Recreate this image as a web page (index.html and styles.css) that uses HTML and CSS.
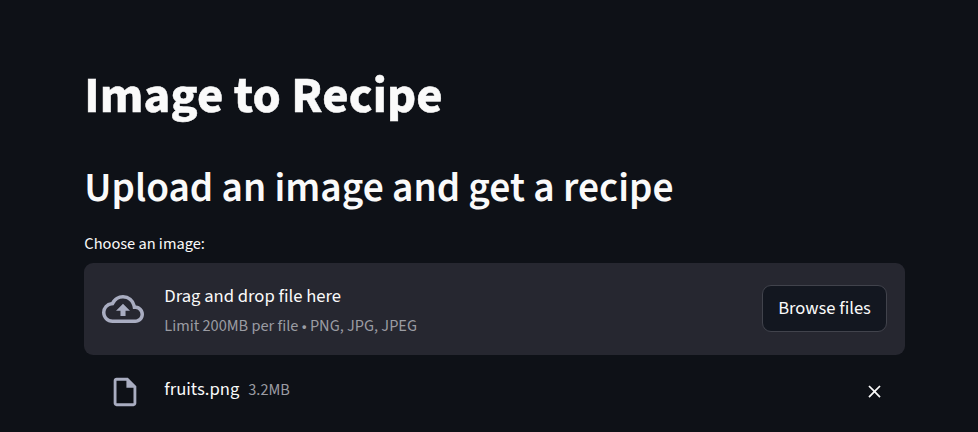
FILE: index.html
```html
<!DOCTYPE html>
<html lang="en">
<head>
<meta charset="utf-8">
<title>Image to Recipe</title>
<link rel="stylesheet" href="styles.css">
</head>
<body>
<main class="page">
  <h1 class="title">Image to Recipe</h1>
  <h2 class="subtitle">Upload an image and get a recipe</h2>
  <div class="label">Choose an image:</div>
  <section class="dropzone">
    <svg class="cloud" viewBox="0 0 24 24"><path d="M19.35 10.04A7.49 7.49 0 0 0 12 4C9.11 4 6.6 5.64 5.35 8.04A5.994 5.994 0 0 0 0 14c0 3.31 2.69 6 6 6h13c2.76 0 5-2.24 5-5 0-2.64-2.05-4.78-4.65-4.96zM19 18H6c-2.21 0-4-1.79-4-4 0-2.05 1.53-3.76 3.56-3.97l1.07-.11.5-.95A5.469 5.469 0 0 1 12 6c2.62 0 4.88 1.86 5.39 4.43l.3 1.5 1.53.11A2.98 2.98 0 0 1 22 15c0 1.65-1.35 3-3 3zM8 13h2.55v3h2.9v-3H16l-4-4z"/></svg>
    <div class="hint">
      <div class="drag">Drag and drop file here</div>
      <div class="limit">Limit 200MB per file • PNG, JPG, JPEG</div>
    </div>
    <button class="browse">Browse files</button>
  </section>
  <div class="file">
    <svg class="doc" viewBox="0 0 24 24"><path d="M14 2H6c-1.100 0-1.990.9-1.990 2L4 20c0 1.100.89 2 1.990 2H18c1.100 0 2-.9 2-2V8l-6-6zM6 20V4h7v5h5v11H6z"/></svg>
    <span class="name">fruits.png</span>
    <span class="size">3.2MB</span>
    <svg class="close" viewBox="0 0 24 24"><path d="M19 6.410 17.590 5 12 10.590 6.410 5 5 6.410 10.590 12 5 17.590 6.410 19 12 13.410 17.590 19 19 17.590 13.410 12z"/></svg>
  </div>
</main>
</body>
</html>
```

FILE: styles.css
```css
* { box-sizing: border-box; }
body { margin: 0; height: 432px; overflow: hidden; background: #0e1117; color: #fafafa; font-family: "Source Sans Pro", "Source Sans 3", "Noto Sans CJK SC", sans-serif; }
.page { width: 820.5px; margin-left: 84.3px; padding-top: 65px; }
.title { margin: 0; height: 62px; line-height: 62px; font-size: 51px; font-weight: 700; letter-spacing: 0.12px; -webkit-text-stroke: 0.5px #fafafa; white-space: nowrap; }
.subtitle { margin: 37px 0 0; height: 50px; line-height: 50px; font-size: 41.500px; font-weight: 600; white-space: nowrap; }
.label { margin-top: 18px; height: 30.600px; line-height: 24px; font-size: 16.350px; }
.dropzone { display: flex; align-items: center; height: 92px; padding: 0 18px; border-radius: 9px; background: #262730; }
.cloud { width: 42px; height: 42px; fill: #a9adc1; margin: 0 20px 0 0; }
.hint { flex: 1; padding-top: 5px; }
.drag { font-size: 18.600px; line-height: 29px; }
.limit { font-size: 16.300px; line-height: 30px; color: #9b9ca3; }
.browse { width: 124.500px; height: 47px; padding: 0 0 1px; border: 1px solid #41434c; border-radius: 9px; background: #131720; color: #fafafa; font: inherit; font-size: 18.500px; }
.file { display: flex; align-items: center; height: 74px; padding: 0 20px 0 23.500px; }
.doc { width: 34px; height: 34px; fill: #a9adc1; margin: 1px 22.500px 0 0; }
.name { font-size: 18.600px; padding-bottom: 5px; }
.size { margin-left: 9px; font-size: 16.300px; padding-bottom: 3px; color: #9b9ca3; }
.close { width: 21px; height: 21px; fill: #fafafa; margin: 0 0 1px auto; }
```
